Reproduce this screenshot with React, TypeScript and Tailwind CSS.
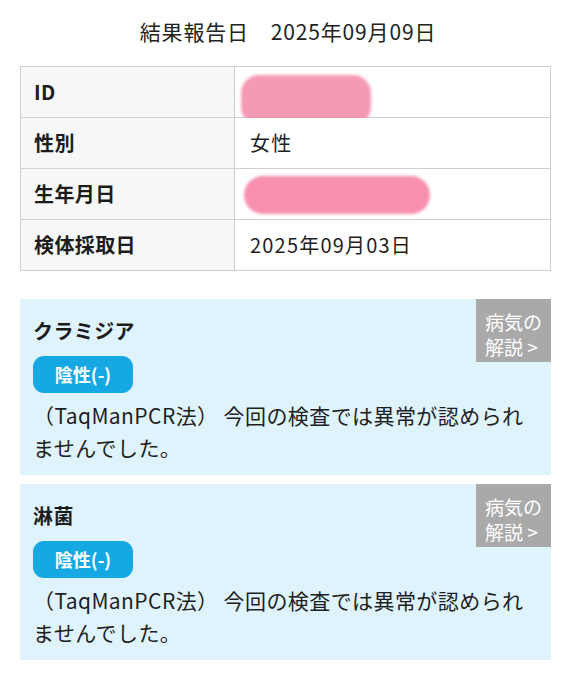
import React from 'react';

const font = { fontFamily: '"Noto Sans CJK JP", "Noto Sans", sans-serif' };

interface Row {
  label: string;
  value?: string;
  redact?: 'short' | 'long';
}

const rows: Row[] = [
  { label: 'ID', redact: 'short' },
  { label: '性別', value: '女性' },
  { label: '生年月日', redact: 'long' },
  { label: '検体採取日', value: '2025年09月03日' },
];

const results = [
  { name: 'クラミジア', result: '陰性(-)', method: '（TaqManPCR法） 今回の検査では異常が認められませんでした。' },
  { name: '淋菌', result: '陰性(-)', method: '（TaqManPCR法） 今回の検査では異常が認められませんでした。' },
];

// pink marker strokes hiding personal data
const Redaction: React.FC<{ kind: 'short' | 'long' }> = ({ kind }) =>
  kind === 'short' ? (
    <div className="absolute left-[6px] top-[8px] h-[50px] w-[130px] rounded-[18px] bg-[#f590ad] opacity-90 blur-[1.5px]" />
  ) : (
    <div className="absolute left-[9px] top-[7px] h-[38px] w-[186px] rounded-full bg-[#f790ae] blur-[1.5px]" />
  );

const ResultCard: React.FC<{ name: string; result: string; method: string }> = ({ name, result, method }) => (
  <div className="relative bg-[#def3fc] pt-[20px] pb-[12px] pl-[13px] pr-[20px]">
    <button className="absolute top-0 right-0 w-[75px] h-[63px] bg-[#a9a9a9] text-white text-[19px] leading-[25px] text-left pl-[9px] pt-[7px]">
      病気の
      <br />
      解説 &gt;
    </button>
    <h3 className="text-[20px] leading-[24px] font-bold text-[#1c1c1c] tracking-[0.02em]">{name}</h3>
    <div className="mt-[13px] inline-flex h-[37px] w-[100px] items-center justify-center rounded-[11px] bg-[#16a8e3] text-white text-[18px] font-bold">
      {result}
    </div>
    <p className="mt-[6px] text-[21px] leading-[32px] text-[#1f1f1f] tracking-[0.02em]">{method}</p>
  </div>
);

export default function App() {
  return (
    <div className="min-h-[696px] w-[576px] bg-white pt-[16px]" style={font}>
      <h1 className="text-center text-[21px] leading-[30px] text-[#222] tracking-[0.04em]">
        結果報告日　2025年09月09日
      </h1>

      <table className="ml-[20px] mt-[20px] w-[531px] border-collapse text-[20px]">
        <tbody>
          {rows.map((r) => (
            <tr key={r.label} className="h-[51px]">
              <th className="w-[214px] border border-[#cfcfcf] bg-[#f7f7f7] pl-[13px] py-0 text-left font-bold text-[#1c1c1c] tracking-[0.02em]">
                {r.label}
              </th>
              <td className="relative border border-[#cfcfcf] bg-white pl-[15px] py-0 text-[#1f1f1f] tracking-[0.06em]">
                {r.redact ? <Redaction kind={r.redact} /> : r.value}
              </td>
            </tr>
          ))}
        </tbody>
      </table>

      <div className="ml-[20px] mt-[28px] flex w-[531px] flex-col gap-[9px]">
        {results.map((r) => (
          <ResultCard key={r.name} {...r} />
        ))}
      </div>
    </div>
  );
}
